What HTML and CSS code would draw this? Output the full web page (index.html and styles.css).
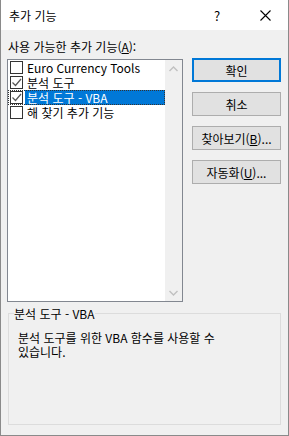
FILE: index.html
```html
<!DOCTYPE html>
<html lang="ko">
<head>
    <meta charset="UTF-8">
    <title>추가 기능</title>
    <link rel="stylesheet" href="styles.css">
</head>
<body>
    <div class="window">
        <div class="titlebar">
            <span class="title">추가 기능</span>
            <span class="help">?</span>
            <span class="close">
                <svg width="11" height="11" viewBox="0 0 11 11"><path d="M0.5 0.5 L10.5 10.5 M10.5 0.5 L0.5 10.5" stroke="#000" stroke-width="1.1" fill="none"/></svg>
            </span>
        </div>

        <div class="content">
            <div class="label">사용 가능한 추가 기능(<u>A</u>):</div>

            <div class="main">
                <div class="listbox">
                    <ul class="items">
                        <li class="item">
                            <span class="check"></span>
                            <span class="text">Euro Currency Tools</span>
                        </li>
                        <li class="item">
                            <span class="check checked"><svg width="11" height="11" viewBox="0 0 11 11"><path d="M1.5 5.5 L4.5 8.5 L10 2" stroke="#555" stroke-width="1.2" fill="none"/></svg></span>
                            <span class="text">분석 도구</span>
                        </li>
                        <li class="item selected">
                            <span class="check checked"><svg width="11" height="11" viewBox="0 0 11 11"><path d="M1.5 5.5 L4.5 8.5 L10 2" stroke="#555" stroke-width="1.2" fill="none"/></svg></span>
                            <span class="text">분석 도구 - VBA</span>
                        </li>
                        <li class="item">
                            <span class="check"></span>
                            <span class="text">해 찾기 추가 기능</span>
                        </li>
                    </ul>
                    <div class="scrollbar">
                        <span class="arrow"><svg width="9" height="6" viewBox="0 0 9 6"><path d="M0.5 5 L4.5 1 L8.5 5" stroke="#c0c0c0" stroke-width="1.4" fill="none"/></svg></span>
                        <span class="arrow"><svg width="9" height="6" viewBox="0 0 9 6"><path d="M0.5 1 L4.5 5 L8.5 1" stroke="#c0c0c0" stroke-width="1.4" fill="none"/></svg></span>
                    </div>
                </div>

                <div class="buttons">
                    <button class="button default">확인</button>
                    <button class="button">취소</button>
                    <button class="button">찾아보기(<u>B</u>)...</button>
                    <button class="button">자동화(<u>U</u>)...</button>
                </div>
            </div>

            <fieldset class="group">
                <legend>분석 도구 - VBA</legend>
                <p>분석 도구를 위한 VBA 함수를 사용할 수<br>있습니다.</p>
            </fieldset>
        </div>
    </div>
</body>
</html>
```

FILE: styles.css
```css
* {
    box-sizing: border-box;
}

body {
    margin: 0;
    padding: 0;
    font-family: "Noto Sans CJK KR", "Noto Sans", sans-serif;
    font-size: 12px;
    line-height: 15px;
    color: #000;
    background-color: #fff;
}

.window {
    width: 289px;
    height: 436px;
    border: 1px solid #8a8a8a;
    border-top: none;
    background-color: #f0f0f0;
    display: flex;
    flex-direction: column;
}

.titlebar {
    height: 30px;
    background-color: #fff;
    display: flex;
    align-items: center;
    padding-left: 8px;
}

.title {
    flex: 1;
}

.help {
    width: 10px;
    margin-right: 36px;
    font-size: 13px;
}

.close {
    display: flex;
    margin-right: 17px;
}

.content {
    flex: 1;
    padding: 9px 7px 10px 6px;
    display: flex;
    flex-direction: column;
}

.label {
    margin-bottom: 4px;
    padding-left: 1px;
}

.main {
    display: flex;
    align-items: flex-start;
}

.listbox {
    width: 176px;
    height: 243px;
    margin-top: 1px;
    border: 1px solid #828790;
    background-color: #fff;
    display: flex;
}

.items {
    list-style: none;
    margin: 0;
    padding: 0;
    flex: 1;
}

.item {
    height: 15px;
    display: flex;
    align-items: center;
    padding-left: 2px;
}

.check {
    width: 13px;
    height: 13px;
    border: 1px solid #333;
    background-color: #fff;
    display: flex;
    align-items: center;
    justify-content: center;
    flex-shrink: 0;
}

.text {
    flex: 1;
    height: 15px;
    margin-left: 2px;
    padding-left: 2px;
    white-space: nowrap;
}

.item.selected {
    outline: 1px dotted #333;
    outline-offset: -1px;
}

.item.selected .text {
    background-color: #0078d7;
    color: #fff;
}

.scrollbar {
    width: 17px;
    background-color: #f0f0f0;
    display: flex;
    flex-direction: column;
    justify-content: space-between;
}

.arrow {
    height: 17px;
    display: flex;
    align-items: center;
    justify-content: center;
}

.buttons {
    margin-left: 9px;
    width: 89px;
    display: flex;
    flex-direction: column;
    gap: 10px;
}

.button {
    height: 24px;
    padding: 0;
    font-family: inherit;
    font-size: 12px;
    color: #000;
    background-color: #e1e1e1;
    border: 1px solid #adadad;
}

.button.default {
    border: 2px solid #0078d7;
}

.group {
    margin: 4px 0 0 1px;
    padding: 0;
    height: 119px;
    border: 1px solid #dcdcdc;
    min-width: 0;
}

.group legend {
    margin-left: 5px;
    padding: 0;
}

.group p {
    margin: 10px 0 0 9px;
    line-height: 14px;
}
```
